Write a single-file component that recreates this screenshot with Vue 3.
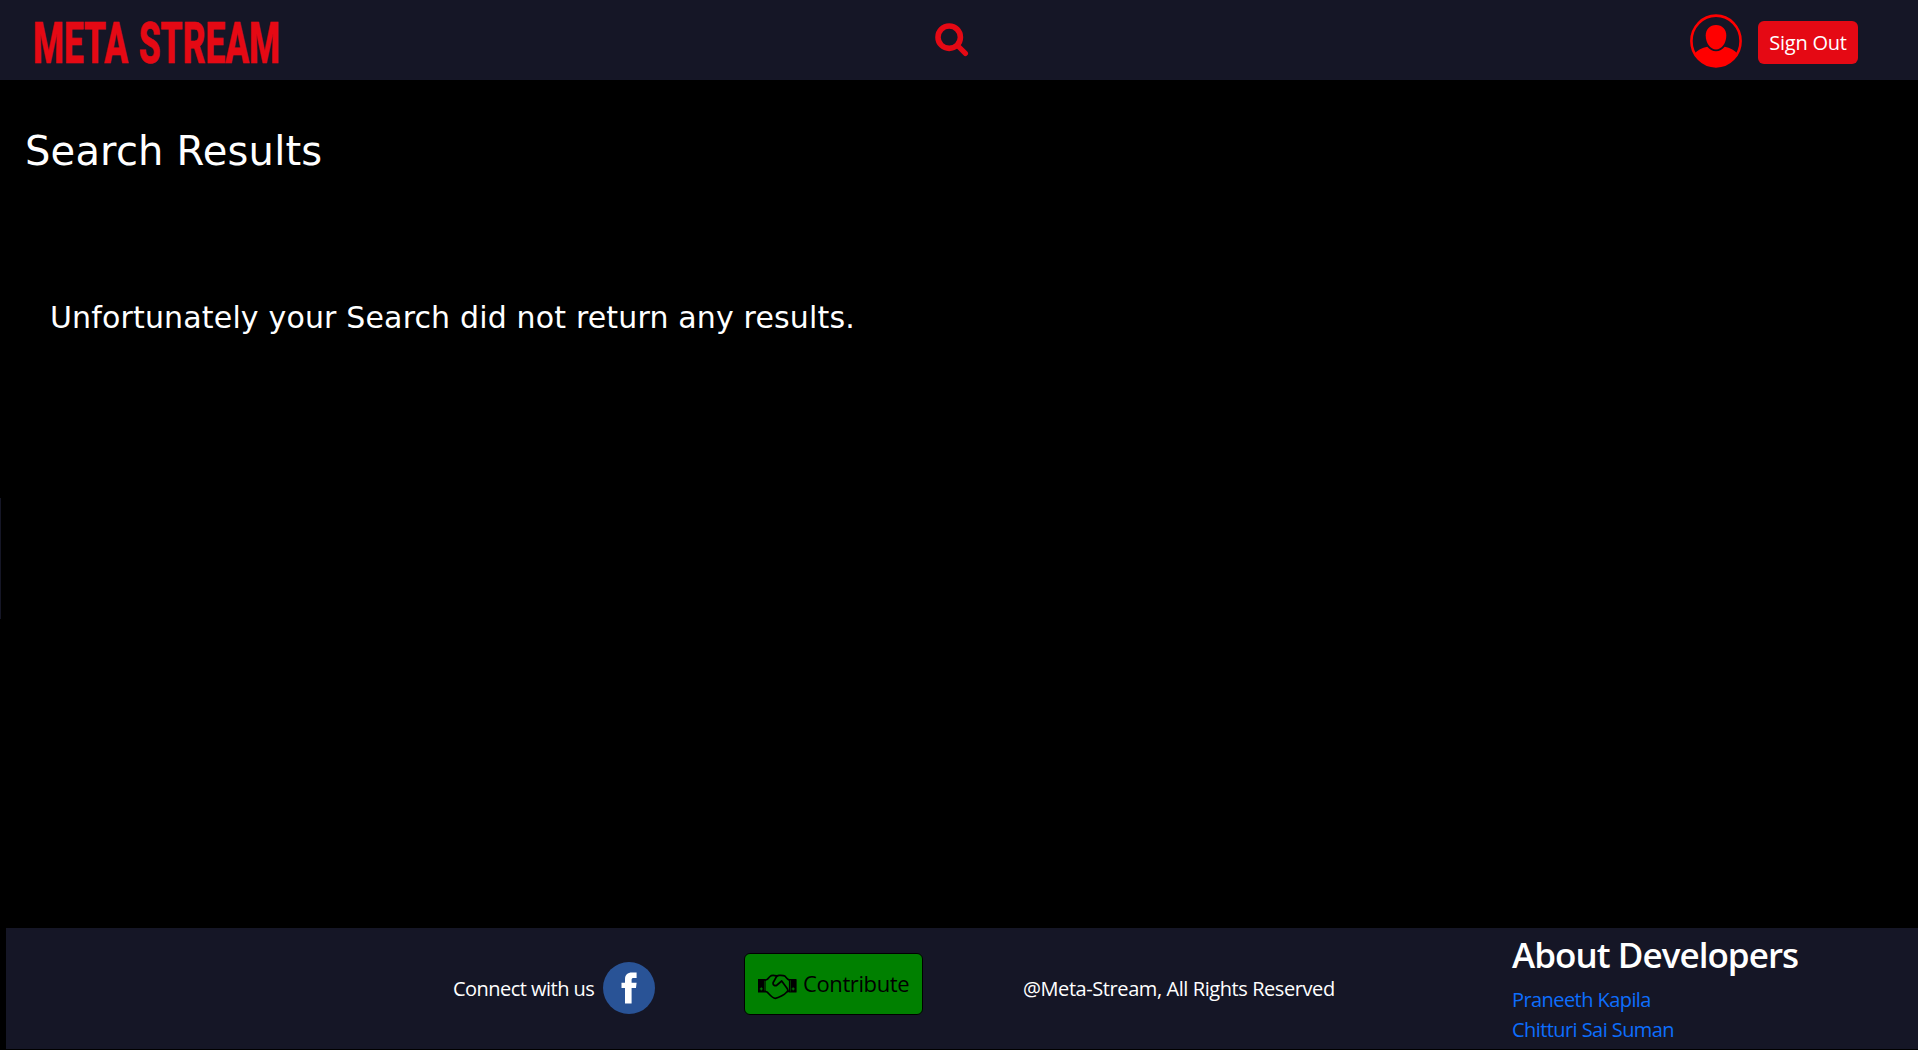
<script setup>
const developers = ['Praneeth Kapila', 'Chitturi Sai Suman']
</script>

<template>
  <div class="page">
    <header class="navbar">
      <a class="logo">
        <svg width="480" height="80" viewBox="0 0 480 80" role="img" aria-label="Meta Stream">
          <text x="33" y="63" textLength="247" lengthAdjust="spacingAndGlyphs">META STREAM</text>
        </svg>
      </a>
      <svg class="search" width="34" height="34" viewBox="0 0 34 34" fill="none" stroke="#e50914">
        <circle cx="14.2" cy="14.2" r="11.2" stroke-width="5.6" />
        <path d="M23.5 23.5L30.4 30.4" stroke-width="5.2" stroke-linecap="round" />
      </svg>
      <div class="account">
        <svg class="avatar" width="52" height="54" viewBox="0 0 52 54">
          <ellipse cx="26" cy="27" rx="24.6" ry="25.4" fill="none" stroke="#f00" stroke-width="2.6" />
          <path d="M26 11c6.200 0 10.300 4.300 10.300 10.600C36.300 29 31.800 35.600 26 35.600S15.700 29 15.700 21.600C15.700 15.300 19.800 11 26 11z" fill="#f00" />
          <path d="M4.500 39.500C7.500 36.300 12 33.700 17.300 32.800C19.500 35.500 22.500 37.300 26 37.300S32.500 35.500 34.700 32.800C40 33.700 44.500 36.300 47.500 39.500C43.500 47.500 35.500 52.400 26 52.400S8.500 47.500 4.500 39.500z" fill="#f00" />
        </svg>
        <button class="signout"><span>Sign Out</span></button>
      </div>
    </header>

    <main class="content">
      <span class="edge"></span>
      <h1>Search Results</h1>
      <p class="message">Unfortunately your Search did not return any results.</p>
    </main>

    <footer class="footer">
      <div class="connect">
        <span class="connect-text">Connect with us</span>
        <svg width="52" height="52" viewBox="0 0 52 52">
          <circle cx="26" cy="26" r="26" fill="#295396" />
          <path d="M22 41.500V26H18.500V20.700H22V17.500C22 12.800 24.500 10.600 29 10.600H33.600V16H30.700C29.200 16 28.600 16.600 28.600 18V20.700H33.600L33 26H28.600V41.500z" fill="#fff" />
        </svg>
      </div>
      <button class="contribute">
        <svg width="39" height="26" viewBox="0 0 39 26" fill="none" stroke="#000" stroke-width="1.700" stroke-linejoin="round" stroke-linecap="round">
          <path d="M0.500 5.500H7V18H0.500zM38 5.500H31.500V18H38z" stroke-width="1.200" />
          <path d="M0.500 5.500H6V18H0.500zM38 5.500H32.500V18H38z" fill="#000" stroke="none" />
          <path d="M3.300 13.800V16M2.200 14.900H4.400M35.200 13.800V16M34.100 14.900H36.300" stroke="#008000" stroke-width="1" />
          <path d="M7 6.200L9.500 5.200L12 2.500C13.300 1.200 15.500 1.200 18.500 1.900M7 17.200L9.500 18.300C12 21 14.500 24.300 17.300 24.300C20.500 23.800 26.500 20.800 28.800 18L31.500 17M31.500 6.200L29.500 5L26.800 2C25.500 1.200 23.500 1.300 21 1.400C19 1.500 18 3.200 17.200 5L15.200 8.500C14.500 10.800 17 12.600 19 11L23.700 7L29 14.200C30.300 16 29.700 17.500 28.800 18" />
        </svg>
        <span>Contribute</span>
      </button>
      <span class="rights">@Meta-Stream, All Rights Reserved</span>
      <section class="about">
        <h2>About Developers</h2>
        <a v-for="name in developers" :key="name">{{ name }}</a>
      </section>
    </footer>
  </div>
</template>

<style>
body { margin: 0; background: #000; }
</style>

<style scoped>
.page {
  display: flex;
  flex-direction: column;
  width: 1918px;
  height: 1050px;
  overflow: hidden;
  box-sizing: border-box;
  padding-bottom: 1px;
  background: #000;
  color: #fff;
  font: 20px/30px "Segoe UI", "Open Sans", "Noto Sans", sans-serif;
}
.navbar {
  display: flex;
  flex: none;
  height: 80px;
  background: #151626;
}
.logo { width: 935px; }
.logo svg { display: block; }
.logo text {
  font: 800 57px Roboto, "Liberation Sans", sans-serif;
  word-spacing: 3px;
  fill: #e50914;
  stroke: #e50914;
  stroke-width: 0.6px;
}
.search { margin-top: 23px; }
.account { display: flex; margin-left: 721px; }
.avatar { margin-top: 14px; }
button { margin: 0; padding: 0; font: inherit; white-space: nowrap; }
.signout {
  width: 100px;
  height: 43px;
  margin: 21px 0 0 16px;
  border: 0;
  border-radius: 6px;
  background: #e50914;
  color: #fff;
  letter-spacing: -0.25px;
}
.content { position: relative; flex: 1; }
.edge {
  position: absolute;
  left: 0;
  top: 418px;
  width: 1px;
  height: 121px;
  background: #151626;
}
h1 {
  margin: 46px 0 0 25px;
  font: 400 40px/50px Verdana, "DejaVu Sans", sans-serif;
  letter-spacing: 0.2px;
}
.message {
  margin: 122px 0 0 50px;
  font: 400 30px/40px Verdana, "DejaVu Sans", sans-serif;
  letter-spacing: 0.16px;
}
.footer {
  display: flex;
  flex: none;
  height: 121px;
  margin-left: 6px;
  background: #151626;
  white-space: nowrap;
}
.connect { display: flex; width: 291px; margin-left: 447px; padding-top: 34px; }
.connect-text { width: 150px; padding-top: 12px; letter-spacing: -0.53px; }
.contribute {
  display: flex;
  align-items: center;
  box-sizing: border-box;
  width: 179px;
  height: 62px;
  margin-top: 25px;
  padding: 0 0 0 13px;
  border: 1px solid #000;
  border-radius: 6px;
  background: #008000;
  color: #000;
  font-size: 22px;
}
.contribute svg { margin-top: 5px; }
.contribute span { margin: -2px 0 0 6px; letter-spacing: -0.4px; }
.rights { width: 488px; margin: 46px 0 0 100px; letter-spacing: -0.42px; }
.about { display: flex; flex-direction: column; margin-left: 1px; }
h2 { margin: 6px 0 9px; font-size: 35px; line-height: 42px; font-weight: 600; letter-spacing: -0.95px; }
.about a { color: #0d6efd; letter-spacing: -0.57px; }
</style>
